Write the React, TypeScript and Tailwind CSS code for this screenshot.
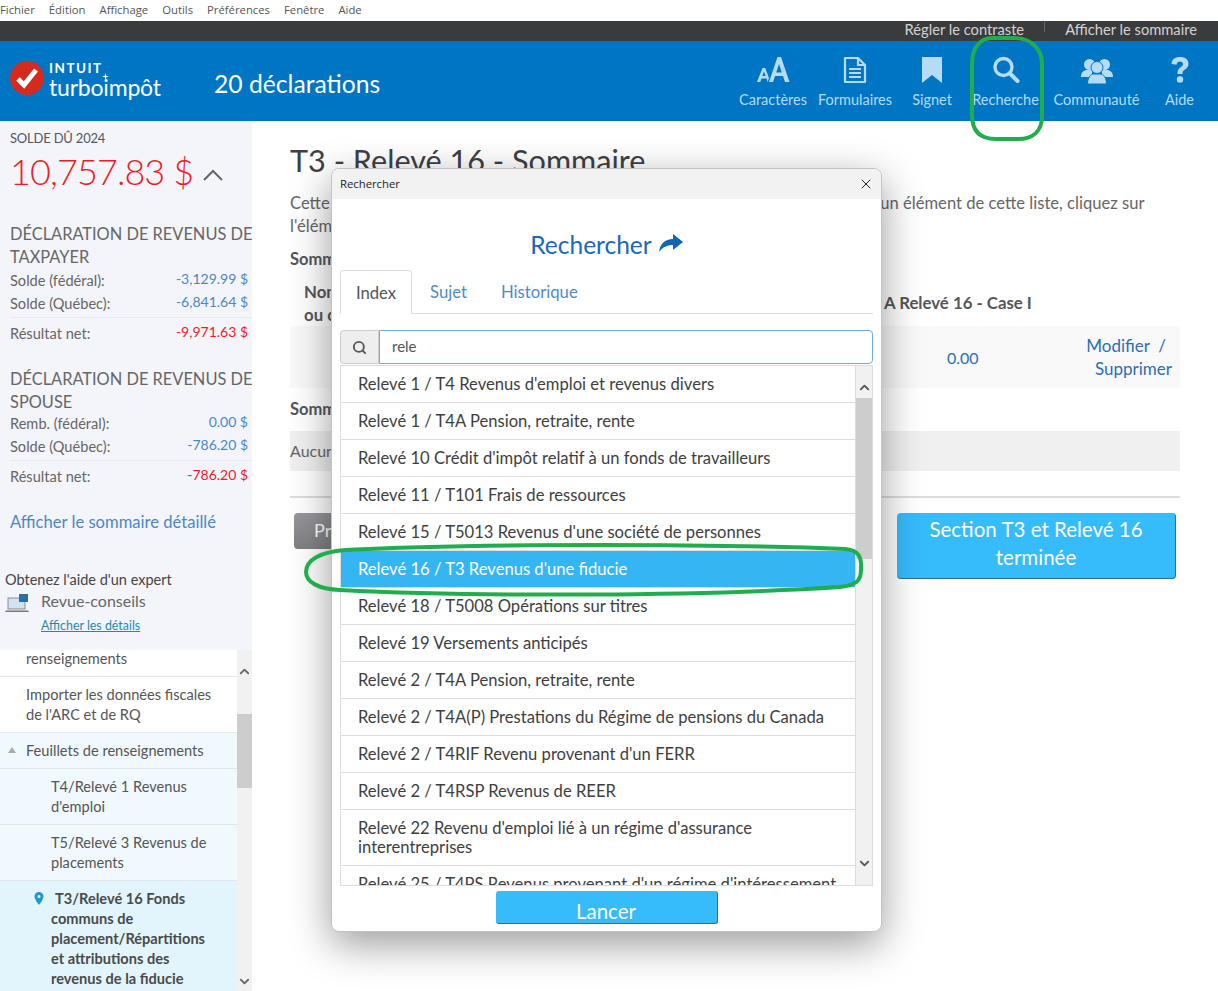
import { ChevronDown, ChevronUp, Search, X } from "lucide-react";

const menus = ["Fichier", "Édition", "Affichage", "Outils", "Préférences", "Fenêtre", "Aide"];

const results = [
  "Relevé 1 / T4 Revenus d'emploi et revenus divers",
  "Relevé 1 / T4A Pension, retraite, rente",
  "Relevé 10 Crédit d'impôt relatif à un fonds de travailleurs",
  "Relevé 11 / T101 Frais de ressources",
  "Relevé 15 / T5013 Revenus d'une société de personnes",
  "Relevé 16 / T3 Revenus d'une fiducie",
  "Relevé 18 / T5008 Opérations sur titres",
  "Relevé 19 Versements anticipés",
  "Relevé 2 / T4A Pension, retraite, rente",
  "Relevé 2 / T4A(P) Prestations du Régime de pensions du Canada",
  "Relevé 2 / T4RIF Revenu provenant d'un FERR",
  "Relevé 2 / T4RSP Revenus de REER",
  "Relevé 22 Revenu d'emploi lié à un régime d'assurance interentreprises",
  "Relevé 25 / T4PS Revenus provenant d'un régime d'intéressement",
];

function ToolIcon({ name }: { name: string }) {
  const color = "#b5dcf2";
  if (name === "font") {
    return (
      <svg width="34" height="28" viewBox="0 0 34 28" fill={color}>
        <path d="M13 26 21.500 1h3.500L33.500 26H29l-2-6h-8l-2 6Zm7.200-9.500h5.600L23 8Z" />
        <path d="M1 26 6.500 12h2.700L13 22l-1.300 4-1.200-3.500H5.500L4.300 26Zm5.300-6h3.400L8 15.500Z" />
      </svg>
    );
  }
  if (name === "form") {
    return (
      <svg width="24" height="28" viewBox="0 0 24 28" fill="none" stroke={color} strokeWidth="2.200">
        <path d="M2 2h13l7 7v17H2Z" strokeLinejoin="round" />
        <path d="M15 2v7h7M6 13h12M6 17h12M6 21h12" />
      </svg>
    );
  }
  if (name === "mark") {
    return (
      <svg width="20" height="28" viewBox="0 0 20 28" fill={color}>
        <path d="M0 1h20v26l-10-8-10 8Z" />
      </svg>
    );
  }
  if (name === "search") {
    return (
      <svg width="28" height="28" viewBox="0 0 28 28" fill="none" stroke={color} strokeWidth="3.400">
        <circle cx="11.500" cy="11" r="8.500" />
        <path d="m18 17.500 7.500 7.500" strokeLinecap="round" strokeWidth="4" />
      </svg>
    );
  }
  if (name === "people") {
    return (
      <svg width="32" height="26" viewBox="0 0 32 26" fill={color}>
        <circle cx="8.500" cy="6.500" r="5.500" />
        <circle cx="23.500" cy="6.500" r="5.500" />
        <path d="M0 19c0-5 3-7 6-7h5v7Zm32 0c0-5-3-7-6-7h-5v7Z" />
        <circle cx="16" cy="9.500" r="6" stroke="#0075c4" strokeWidth="1" />
        <path d="M6.500 26c0-6 3-10 6-10h7c3 0 6 4 6 10Z" stroke="#0075c4" strokeWidth="1" />
      </svg>
    );
  }
  return (
    <svg width="20" height="28" viewBox="0 0 20 28" fill={color}>
      <path d="M1.500 8C1.800 3.500 5 1 10 1c5.200 0 8.500 2.700 8.500 6.800 0 3-1.700 4.400-3.500 5.700-1.700 1.200-2.500 1.900-2.500 3.700v.8H7.500v-1.200c0-2.800 1.200-4.200 3-5.500 1.500-1.100 2.500-1.800 2.500-3.200 0-1.500-1.200-2.500-3-2.500-2 0-3.200 1.200-3.400 3.200Z" />
      <circle cx="10" cy="23.500" r="3.200" />
    </svg>
  );
}

const tools = [
  { name: "font", label: "Caractères", width: "w-[78px]" },
  { name: "form", label: "Formulaires", width: "w-[86px]" },
  { name: "mark", label: "Signet", width: "w-[68px]" },
  { name: "search", label: "Recherche", width: "w-[79px]" },
  { name: "people", label: "Communauté", width: "w-[103px]" },
  { name: "help", label: "Aide", width: "w-[63px]" },
];

function AmountRow({ label, value, tone }: { label: string; value: string; tone: string }) {
  return (
    <div className="flex justify-between pr-1 h-[23px]">
      <span className="text-[14.600px] text-[#666] mt-[2px]">{label}</span>
      <span className={`text-[14px] ${tone}`}>{value}</span>
    </div>
  );
}

function Sidebar() {
  return (
    <aside className="w-[252px] h-[870px] shrink-0 bg-[#f4f5fb] overflow-hidden flex flex-col">
      <div className="pl-[10px] pt-[9px] text-[#55565a]">
        <div className="text-[13px] leading-[16px] tracking-[-0.2px]">SOLDE DÛ 2024</div>
        <div className="flex items-center mt-[4px] h-[42px]">
          <span className="text-[36px] leading-[42px] text-[#ee1c25] font-light tracking-[-0.9px]">10,757.83 $</span>
          <svg width="22" height="14" viewBox="0 0 22 14" fill="none" stroke="#666" strokeWidth="2" className="ml-[9px] mt-[8px]">
            <path d="m2 12 9-9 9 9" />
          </svg>
        </div>

        <div className="mt-[30px] text-[16.400px] leading-[23px] text-[#666] whitespace-nowrap">
          DÉCLARATION DE REVENUS DE
          <br />
          TAXPAYER
        </div>
        <AmountRow label="Solde (fédéral):" value="-3,129.99 $" tone="text-[#4b87c5]" />
        <AmountRow label="Solde (Québec):" value="-6,841.64 $" tone="text-[#4b87c5]" />
        <div className="border-t border-[#e8e8ee] mt-[3px] pt-[3px]">
          <AmountRow label="Résultat net:" value="-9,971.63 $" tone="text-[#ee1c25]" />
        </div>

        <div className="mt-[23px] text-[16.400px] leading-[23px] text-[#666] whitespace-nowrap">
          DÉCLARATION DE REVENUS DE
          <br />
          SPOUSE
        </div>
        <div className="-mt-[2px]">
          <AmountRow label="Remb. (fédéral):" value="0.00 $" tone="text-[#4b87c5]" />
        </div>
        <AmountRow label="Solde (Québec):" value="-786.20 $" tone="text-[#4b87c5]" />
        <div className="border-t border-[#e8e8ee] mt-[3px] pt-[3px]">
          <AmountRow label="Résultat net:" value="-786.20 $" tone="text-[#ee1c25]" />
        </div>

        <div className="mt-[24px] text-[16.600px] leading-[22px] text-[#4b87c5]">Afficher le sommaire détaillé</div>
      </div>

      <div className="pl-[5px] mt-[37px] h-[80px] shrink-0">
        <div className="text-[14.500px] leading-[20px] text-[#444]">Obtenez l'aide d'un expert</div>
        <div className="flex items-center h-[22px]">
          <svg width="25" height="20" viewBox="0 0 25 20" fill="none" className="mt-[3px]">
            <rect x="3" y="5" width="17" height="11" fill="#cfe3f3" stroke="#777" strokeWidth="0.800" />
            <rect x="14" y="1" width="9" height="8" fill="#2b6ea8" />
            <path d="M0.500 17.500h23v1.500h-23Z" fill="#777" />
          </svg>
          <span className="ml-[11px] text-[16px] text-[#666]">Revue-conseils</span>
        </div>
        <div className="ml-[36px] mt-[5px] text-[12.400px] leading-[18px] text-[#1f8ba6] underline">Afficher les détails</div>
      </div>

      <div className="flex-1 flex min-h-0 overflow-hidden">
        <div className="w-[237px] shrink-0 text-[14.600px] leading-[20px] text-[#555]">
          <div className="h-[28px] bg-white pl-[26px] border-b border-[#e6e6e6] -mt-[1px]">renseignements</div>
          <div className="h-[56px] bg-white pl-[26px] pt-[8px] border-b border-[#e0e6ea] pr-[20px]">
            Importer les données fiscales de l'ARC et de RQ
          </div>
          <div className="h-[36px] bg-[#f0f9fd] pl-[26px] pt-[8px] border-b border-[#e0e6ea] relative">
            <span className="absolute left-[8px] top-[14px] w-0 h-0 border-x-[4px] border-x-transparent border-b-[6px] border-b-[#aaa]" />
            Feuillets de renseignements
          </div>
          <div className="h-[56px] bg-[#f0f9fd] pl-[51px] pt-[8px] pr-[20px] border-b border-[#e0e6ea]">
            T4/Relevé 1 Revenus d'emploi
          </div>
          <div className="h-[56px] bg-[#f0f9fd] pl-[51px] pt-[8px] pr-[20px] border-b border-[#e0e6ea]">
            T5/Relevé 3 Revenus de placements
          </div>
          <div className="h-[120px] bg-[#e3f5fc] pl-[51px] pt-[8px] pr-[20px] font-bold relative text-[#4a4a4a]">
            <svg width="10" height="13" viewBox="0 0 10 13" className="absolute left-[34px] top-[11px]" fill="#1a9bd0">
              <path fillRule="evenodd" d="M5 0a4.500 4.500 0 0 1 4.500 4.500C9.500 7.500 5 13 5 13S.5 7.500.5 4.500A4.500 4.500 0 0 1 5 0Zm0 3a1.500 1.500 0 1 0 0 3 1.500 1.500 0 0 0 0-3Z" />
            </svg>
            <span className="ml-[4px]">T3/Relevé 16 Fonds</span> communs de placement/Répartitions et attributions des revenus de la fiducie
          </div>
        </div>
        <div className="w-[15px] bg-[#f1f1f1] flex flex-col items-center relative">
          <ChevronUp size={15} strokeWidth={3} className="mt-[14px] text-[#666]" />
          <div className="absolute top-[64px] left-0 w-full h-[74px] bg-[#cdcdcd]" />
          <ChevronDown size={15} strokeWidth={3} className="absolute bottom-[2px] text-[#666]" />
        </div>
      </div>
    </aside>
  );
}

function MainContent() {
  return (
    <main className="flex-1 pl-[38px] pr-[38px] pt-[22px] text-[#55565a]">
      <h1 className="text-[30.600px] leading-[36px] text-[#3d4045] whitespace-nowrap">T3 - Relevé 16 - Sommaire</h1>
      <p className="mt-[13px] text-[16.600px] leading-[23px] text-[#666]">
        Cette page affiche le sommaire de vos feuillets reçus. Pour modifier ou supprimer un élément de cette liste, cliquez sur
        l'élément voulu.
      </p>
      <div className="mt-[10px] text-[16.500px] font-bold leading-[23px]">Sommaire</div>
      <div className="mt-[9px] h-[46px] flex text-[16.800px] font-bold leading-[23px] relative">
        <div className="pl-[14px] w-[200px]">
          Nom
          <br />
          ou code
        </div>
        <div className="absolute left-[594px] top-[11px] whitespace-nowrap">A Relevé 16 - Case I</div>
      </div>
      <div className="mt-[0px] h-[62px] bg-[#f9f9fa] flex justify-end items-center relative text-[#2a6fb5] text-[17px]">
        <span className="absolute left-[657px] top-[20px] text-[16px]">0.00</span>
        <div className="text-right pr-[8px] leading-[23px] w-[110px] -mt-[1px]">
          <span className="pr-[6px]">Modifier &nbsp;/</span>
          <br />
          Supprimer
        </div>
      </div>
      <div className="mt-[10px] text-[16.500px] font-bold leading-[23px]">Sommaire</div>
      <div className="mt-[10px] h-[40px] bg-[#f0f0f0] text-[16px] leading-[40px] text-[#666]">Aucun élément</div>
      <div className="mt-[25px] h-[2px] bg-[#ddd]" />
      <div className="mt-[15px] flex justify-between items-start px-[4px]">
        <div className="w-[120px] h-[36px] rounded-[4px] bg-linear-to-b from-[#97979b] to-[#808084] text-white text-[18px] pl-[20px] leading-[34px]">Précédent</div>
        <div className="w-[279px] h-[66px] rounded-[4px] bg-[#36bbfb] border-b border-r border-[#2b6f93] text-white text-[20.500px] leading-[28px] text-center pt-[2px]">
          Section T3 et Relevé 16
          <br />
          terminée
        </div>
      </div>
    </main>
  );
}

function SearchDialog() {
  return (
    <div className="absolute left-[331px] top-[168px] w-[551px] h-[764px] bg-white rounded-[8px] border border-[#c4c4c4] shadow-[0_12px_40px_rgba(0,0,0,0.4)] flex flex-col overflow-hidden">
      <div className="h-[30px] shrink-0 bg-[#f2f2f2] flex items-center justify-between pl-[8px] pr-[7px]">
        <span className="text-[11.300px] text-[#222] font-['Open_Sans',sans-serif]">Rechercher</span>
        <X size={16} strokeWidth={1.500} className="text-[#222]" />
      </div>
      <div className="h-[71px] shrink-0 flex items-center justify-center pt-[22px] text-[24.500px] text-[#1a68b8]">
        Rechercher
        <svg width="24" height="18" viewBox="0 0 24 18" fill="#0f66b8" className="ml-[7px] -mt-[5px]">
          <path d="M14 0l10 8-10 8v-5C8 11 4 13 0 18 1 10 6 5 14 5Z" />
        </svg>
      </div>
      <div className="mx-[8px] h-[44px] shrink-0 border-b border-[#ddd] flex text-[16.700px] text-[#4f8bc7]">
        <div className="w-[72px] h-[44px] border border-b-white border-[#ddd] rounded-t-[4px] text-[#555] text-center leading-[45px]">
          Index
        </div>
        <div className="ml-[18px] leading-[45px]">Sujet</div>
        <div className="ml-[34px] leading-[45px]">Historique</div>
      </div>
      <div className="mx-[8px] mt-[16px] h-[34px] shrink-0 flex">
        <div className="w-[39px] bg-[#eee] border border-[#ccc] rounded-l-[4px] flex items-center justify-center">
          <Search size={15} strokeWidth={3} className="text-[#555]" />
        </div>
        <div className="flex-1 border border-[#66afe9] rounded-r-[4px] pl-[12px] text-[15px] leading-[31px] text-[#555]">rele</div>
      </div>
      <div className="mx-[8px] mt-[1px] h-[521px] shrink-0 border border-[#ddd] flex overflow-hidden">
        <div className="flex-1 min-w-0 text-[16.600px] leading-[19px] text-[#3e3e3e]">
          {results.map((row, i) => (
            <div
              key={row}
              className={
                i === 5
                  ? "bg-[#36b5f3] text-white pl-[17px] pr-[15px] pt-[9px] pb-[8px] border-b border-[#ddd]"
                  : "pl-[17px] pr-[15px] pt-[9px] pb-[8px] border-b border-[#ddd]"
              }
            >
              {row}
            </div>
          ))}
        </div>
        <div className="w-[17px] shrink-0 bg-[#f1f1f1] relative flex justify-center border-l border-[#ddd]">
          <ChevronUp size={15} strokeWidth={3} className="mt-[14px] text-[#555]" />
          <div className="absolute top-[32px] left-0 w-full h-[161px] bg-[#cdcdcd]" />
          <ChevronDown size={15} strokeWidth={3} className="absolute bottom-[14px] text-[#555]" />
        </div>
      </div>
      <div className="flex justify-center mt-[5px]">
        <div className="w-[222px] h-[33px] rounded-[3px] bg-[#36bbfb] border-b border-r border-[#2b6f93] text-white text-[20.500px] leading-[41px] text-center overflow-hidden">
          Lancer
        </div>
      </div>
    </div>
  );
}

export default function App() {
  return (
    <div className="w-[1218px] h-[991px] overflow-hidden relative bg-white font-['Lato',sans-serif]">
      <div className="h-[21px] flex gap-[14px] items-center text-[11.300px] text-[#555] font-['Open_Sans',sans-serif] bg-white">
        {menus.map((m) => (
          <span key={m}>{m}</span>
        ))}
      </div>
      <div className="h-[20px] bg-[#3a3b3d] flex justify-end items-start text-[14.700px] leading-[16px] text-[#d3d3d3] overflow-hidden">
        <span>Régler le contraste</span>
        <span className="mx-[20px] h-[11px] w-px bg-[#666]" />
        <span className="mr-[21px]">Afficher le sommaire</span>
      </div>
      <header className="h-[80px] bg-[#0075c4] flex items-center text-white">
        <div className="ml-[10px] w-[34px] h-[34px] rounded-full bg-[#d52b1e] flex items-center justify-center -mt-[6px]">
          <svg width="24" height="22" viewBox="0 0 24 22" fill="none" stroke="#fff" strokeWidth="5">
            <path d="m3 12 6 6L21 3" />
          </svg>
        </div>
        <div className="ml-[5px] w-[115px] relative -mt-[4px]">
          <div className="text-[13.500px] leading-[13px] font-bold tracking-[1.500px]">INTUIT</div>
          <div className="text-[23px] leading-[18px] mt-[3px] tracking-[-0.2px]">turboimpôt</div>
          <svg width="7" height="7" viewBox="0 0 7 7" fill="#fff" className="absolute left-[53px] top-[11px]">
            <path d="M3.500 0 4.200 2.800 7 3.500 4.200 4.200 3.500 7 2.800 4.200 0 3.500 2.800 2.800Z" />
          </svg>
        </div>
        <div className="ml-[50px] mt-[5px] text-[24.700px]">20 déclarations</div>
        <div className="ml-auto mr-[7px] flex mt-[2px]">
          {tools.map((t) => (
            <div key={t.name} className={`${t.width} flex flex-col items-center text-[#b5dcf2]`}>
              <div className="h-[29px] flex items-end">
                <ToolIcon name={t.name} />
              </div>
              <span className="mt-[7px] text-[14.500px] leading-[18px] whitespace-nowrap">{t.label}</span>
            </div>
          ))}
        </div>
      </header>
      <div className="flex">
        <Sidebar />
        <MainContent />
      </div>

      <SearchDialog />

      {/* green marks drawn on top of the capture */}
      <svg className="absolute left-0 top-0 pointer-events-none" width="1218" height="991" fill="none" stroke="#1fae4b" strokeWidth="4">
        <path d="M992 38h22c16 0 28 10 28 26v52c0 16-10 23-24 23h-22c-16 0-24-8-24-24V64c0-16 8-26 20-26Z" />
        <path d="M345 550C480 543 720 544 845 549 858 550 862 556 861 570 861 582 855 585 840 587 700 596 480 597 340 590 318 589 306 582 306 572 306 560 320 552 345 550Z" />
      </svg>
    </div>
  );
}
